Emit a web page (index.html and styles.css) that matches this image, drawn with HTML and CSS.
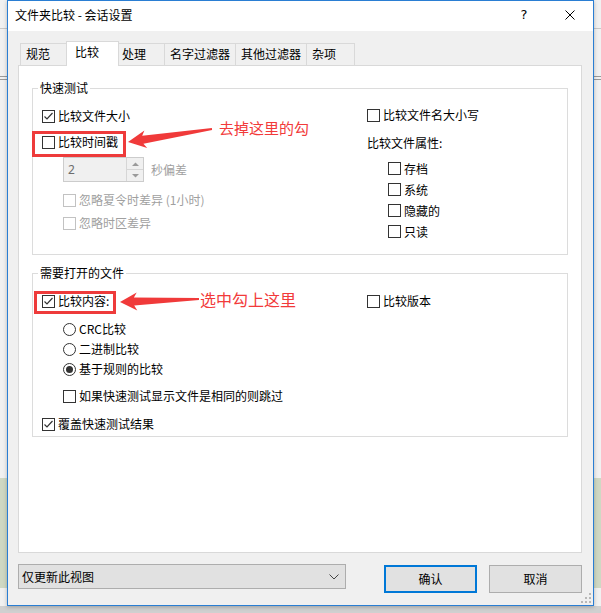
FILE: index.html
```html
<!DOCTYPE html>
<html lang="zh-CN">
<head>
<meta charset="utf-8">
<title>文件夹比较 - 会话设置</title>
<link rel="stylesheet" href="styles.css">
</head>
<body>
<div class="dialog">
  <div class="titlebar">
    <span class="title">文件夹比较 - 会话设置</span>
    <span class="tb-btn">?</span>
    <span class="tb-btn"><svg width="10" height="10" viewBox="0 0 10 10"><path d="M0.5 0.5L9.5 9.5M9.5 0.5L0.5 9.5" stroke="#000" stroke-width="1" fill="none"/></svg></span>
  </div>
  <div class="client">
    <div class="tabs">
      <div class="tab">规范</div>
      <div class="tab active">比较</div>
      <div class="tab">处理</div>
      <div class="tab">名字过滤器</div>
      <div class="tab">其他过滤器</div>
      <div class="tab">杂项</div>
    </div>
    <div class="panel">
      <fieldset class="group">
        <legend>快速测试</legend>
        <div class="cols">
          <div class="col col-left">
            <div class="row mt10"><span class="cb"><svg viewBox="0 0 11 11"><polyline points="1.5,5.5 4,8 9.5,2"/></svg></span>比较文件大小</div>
            <div class="row mt6"><span class="cb"></span>比较时间戳</div>
            <div class="spinrow">
              <div class="spin">
                <span class="spin-val">2</span>
                <span class="spin-btns">
                  <span class="spin-btn"><svg width="7" height="4" viewBox="0 0 7 4"><path d="M0 4L3.5 0.5L7 4Z" fill="#9a9a9a"/></svg></span>
                  <span class="spin-btn"><svg width="7" height="4" viewBox="0 0 7 4"><path d="M0 0L3.5 3.5L7 0Z" fill="#9a9a9a"/></svg></span>
                </span>
              </div>
              <span class="dis-text">秒偏差</span>
            </div>
            <div class="row indent dis mt8"><span class="cb off"></span>忽略夏令时差异 (1小时)</div>
            <div class="row indent dis mt3"><span class="cb off"></span>忽略时区差异</div>
          </div>
          <div class="col col-right">
            <div class="row mt9"><span class="cb"></span>比较文件名大小写</div>
            <div class="row mt8">比较文件属性:</div>
            <div class="row sub indent mt5"><span class="cb"></span>存档</div>
            <div class="row sub indent"><span class="cb"></span>系统</div>
            <div class="row sub indent"><span class="cb"></span>隐藏的</div>
            <div class="row sub indent"><span class="cb"></span>只读</div>
          </div>
        </div>
      </fieldset>
      <fieldset class="group group2">
        <legend>需要打开的文件</legend>
        <div class="cols">
          <div class="col col-left pb2">
            <div class="row mt10"><span class="cb"><svg viewBox="0 0 11 11"><polyline points="1.5,5.5 4,8 9.5,2"/></svg></span>比较内容:</div>
            <div class="row indent mt8"><span class="rb"></span>CRC比较</div>
            <div class="row indent"><span class="rb"></span>二进制比较</div>
            <div class="row indent"><span class="rb on"></span>基于规则的比较</div>
            <div class="row indent mt7"><span class="cb"></span>如果快速测试显示文件是相同的则跳过</div>
            <div class="row mt8"><span class="cb"><svg viewBox="0 0 11 11"><polyline points="1.5,5.5 4,8 9.5,2"/></svg></span>覆盖快速测试结果</div>
          </div>
          <div class="col col-right">
            <div class="row mt10"><span class="cb"></span>比较版本</div>
          </div>
        </div>
      </fieldset>
    </div>
    <div class="footer">
      <div class="combo"><span>仅更新此视图</span><svg width="10" height="6" viewBox="0 0 10 6"><path d="M0.5 0.5L5 5L9.5 0.5" stroke="#444" stroke-width="1" fill="none"/></svg></div>
      <div class="btn default">确认</div>
      <div class="btn">取消</div>
    </div>
  </div>
  <div class="grip">
    <span></span><span></span><span></span><span></span><span></span><span></span>
  </div>
</div>

<div class="annot">
  <div class="mark mark1"></div>
  <div class="mark mark2"></div>
  <svg class="arrows" width="601" height="613" viewBox="0 0 601 613">
    <polygon points="128,142 147.2,148.1 143.4,143.7 212.1,129.9 211.9,128.1 142.2,135.7 144.4,130.4" fill="#f03a3a"/>
    <polygon points="120,302 137.3,310.5 134.2,305.5 199,299.9 199,298.1 133.9,297.5 136.7,292.4" fill="#f03a3a"/>
  </svg>
  <div class="note note1">去掉这里的勾</div>
  <div class="note note2">选中勾上这里</div>
</div>
</body>
</html>
```

FILE: styles.css
```css
* { box-sizing: border-box; }

html, body {
  margin: 0;
  height: 100%;
}

body {
  position: relative;
  overflow: hidden;
  font-family: "Noto Sans CJK SC", "Noto Sans", sans-serif;
  font-size: 12px;
  line-height: 16px;
  color: #000;
  background:
    linear-gradient(#cfd8c3, #cfd8c3) 0 478px / 100% 110px no-repeat,
    linear-gradient(#9a9a9a, #9a9a9a) 0 76px / 100% 1px no-repeat,
    linear-gradient(#9a9a9a, #9a9a9a) 0 79px / 100% 1px no-repeat,
    linear-gradient(#c8c8c8, #c8c8c8) 0 28px / 100% 1px no-repeat,
    linear-gradient(#d0d0d0, #d0d0d0) 0 606px / 100% 7px no-repeat,
    #f1f1f1;
}

.dialog {
  position: relative;
  margin-left: 7px;
  width: 587px;
  height: 606px;
  border: 1px solid #2a7ed3;
  background: #f0f0f0;
  display: flex;
  flex-direction: column;
  box-shadow: 0 1px 4px rgba(0, 0, 0, 0.25);
}

.titlebar {
  height: 30px;
  flex: none;
  background: #fff;
  display: flex;
  align-items: center;
  padding-left: 7px;
  padding-bottom: 2px;
}

.title { flex: 1; }

.tb-btn {
  width: 46px;
  height: 28px;
  display: flex;
  align-items: center;
  justify-content: center;
  font-family: "DejaVu Sans", sans-serif;
  font-size: 13px;
}

.client {
  flex: 1;
  padding: 0 11px 0 10px;
  display: flex;
  flex-direction: column;
}

.tabs {
  margin-top: 10px;
  height: 24px;
  display: flex;
  align-items: flex-end;
  padding-left: 2px;
}

.tab {
  position: relative;
  height: 22px;
  min-width: 49px;
  margin-left: -1px;
  padding: 0 5px;
  border: 1px solid #d9d9d9;
  border-bottom: none;
  background: #f0f0f0;
  line-height: 20px;
  white-space: nowrap;
}

.tab:first-child { margin-left: 0; }

.tab.active {
  z-index: 2;
  height: 25px;
  min-width: 53px;
  margin: 0 -2px -1px -3px;
  padding: 0 5px 3px 8px;
  background: #fff;
}

.panel {
  position: relative;
  height: 488px;
  flex: none;
  border: 1px solid #d9d9d9;
  background: #fff;
  padding-top: 14px;
}

.group {
  margin: 0 13px;
  padding: 0;
  border: 1px solid #dcdcdc;
  min-width: 0;
}

.group2 { margin-top: 10px; }

.group legend {
  margin-left: 5px;
  padding: 0 2px;
  line-height: 16px;
}

.cols {
  display: grid;
  grid-template-columns: 334px 1fr;
}

.col-left { padding-left: 9px; }
.col-right { padding-bottom: 12px; }
.pb2 { padding-bottom: 2px; }

.row {
  height: 20px;
  display: flex;
  align-items: center;
  white-space: nowrap;
}

.row.sub { height: 21px; }
.indent { padding-left: 21px; }
.dis { color: #a0a0a0; }

.mt3 { margin-top: 3px; }
.mt5 { margin-top: 5px; }
.mt6 { margin-top: 6px; }
.mt7 { margin-top: 7px; }
.mt8 { margin-top: 8px; }
.mt9 { margin-top: 9px; }
.mt10 { margin-top: 10px; }

.cb {
  flex: none;
  width: 13px;
  height: 13px;
  margin-right: 3px;
  border: 1px solid #333;
  background: #fff;
  display: flex;
}

.cb svg {
  width: 11px;
  height: 11px;
  fill: none;
  stroke: #333;
  stroke-width: 1.2;
}

.cb.off { border-color: #c2c2c2; }

.rb {
  flex: none;
  width: 13px;
  height: 13px;
  margin-right: 3px;
  border: 1px solid #333;
  border-radius: 50%;
  background: #fff;
  display: flex;
  align-items: center;
  justify-content: center;
}

.rb.on::after {
  content: "";
  width: 7px;
  height: 7px;
  border-radius: 50%;
  background: #333;
}

.spinrow {
  margin-top: 5px;
  padding-left: 21px;
  height: 25px;
  display: flex;
  align-items: center;
}

.spin {
  width: 81px;
  height: 25px;
  border: 1px solid #cccccc;
  background: #f0f0f0;
  display: flex;
  margin-right: 7px;
}

.spin-val {
  flex: 1;
  padding-left: 4px;
  line-height: 23px;
  color: #6d6d6d;
  font-family: "Noto Sans", sans-serif;
  font-size: 12px;
}

.spin-btns {
  width: 17px;
  display: flex;
  flex-direction: column;
  border-left: 1px solid #d6d6d6;
}

.spin-btn {
  flex: 1;
  display: flex;
  align-items: center;
  justify-content: center;
}

.spin-btn + .spin-btn { border-top: 1px solid #d6d6d6; }

.dis-text { color: #a0a0a0; }

.footer {
  margin-top: 11px;
  display: flex;
  align-items: flex-start;
}

.combo {
  width: 328px;
  height: 25px;
  border: 1px solid #adadad;
  background: #e1e1e1;
  display: flex;
  align-items: center;
  justify-content: space-between;
  padding: 0 6px 0 3px;
}

.btn {
  width: 93px;
  height: 28px;
  margin-top: 1px;
  border: 1px solid #adadad;
  background: #e1e1e1;
  display: flex;
  align-items: center;
  justify-content: center;
  margin-left: 12px;
}

.btn.default {
  margin-left: 38px;
  border: 2px solid #0078d7;
}

.grip {
  position: absolute;
  right: 2px;
  bottom: 2px;
  width: 10px;
  height: 10px;
}

.grip span {
  position: absolute;
  width: 2px;
  height: 2px;
  background: #b8b8b8;
}

.grip span:nth-child(1) { right: 0; bottom: 0; }
.grip span:nth-child(2) { right: 4px; bottom: 0; }
.grip span:nth-child(3) { right: 8px; bottom: 0; }
.grip span:nth-child(4) { right: 0; bottom: 4px; }
.grip span:nth-child(5) { right: 4px; bottom: 4px; }
.grip span:nth-child(6) { right: 0; bottom: 8px; }

.annot {
  position: absolute;
  left: 0;
  top: 0;
  width: 601px;
  height: 613px;
  pointer-events: none;
}

.arrows {
  position: absolute;
  left: 0;
  top: 0;
}

.mark {
  position: absolute;
  border: 3px solid #ee3b3b;
}

.mark1 { left: 32px; top: 131px; width: 94px; height: 26px; }
.mark2 { left: 34px; top: 291px; width: 82px; height: 23px; }

.note {
  position: absolute;
  color: #f23a3a;
  line-height: 20px;
  white-space: nowrap;
}

.note1 { left: 219px; top: 118px; font-size: 15px; }
.note2 { left: 200px; top: 289px; font-size: 16px; }
```
